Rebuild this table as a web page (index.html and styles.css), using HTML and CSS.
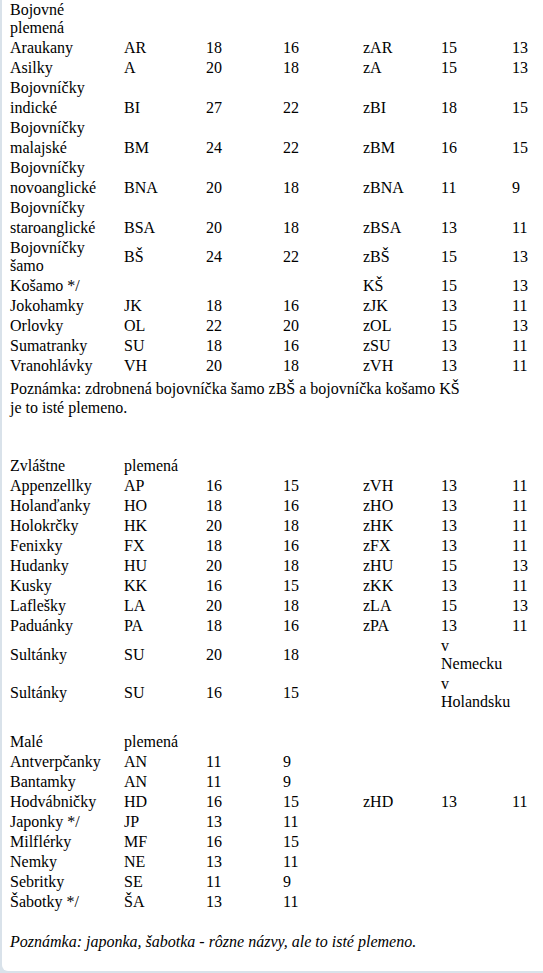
FILE: index.html
```html
<!DOCTYPE html>
<html lang="sk">
<head>
<meta charset="utf-8">
<title>Plemená</title>
<link rel="stylesheet" href="styles.css">
</head>
<body>
<div class="page">
  <table class="breeds">
    <colgroup><col class="c-name"><col class="c-code"><col class="c-n1"><col class="c-n2"><col class="c-zcode"><col class="c-z1"><col class="c-z2"></colgroup>
    <tr><td>Bojovné<br>plemená</td><td></td><td></td><td></td><td></td><td></td><td></td></tr>
    <tr><td>Araukany</td><td>AR</td><td>18</td><td>16</td><td>zAR</td><td>15</td><td>13</td></tr>
    <tr><td>Asilky</td><td>A</td><td>20</td><td>18</td><td>zA</td><td>15</td><td>13</td></tr>
    <tr><td>Bojovníčky</td><td></td><td></td><td></td><td></td><td></td><td></td></tr>
    <tr><td>indické</td><td>BI</td><td>27</td><td>22</td><td>zBI</td><td>18</td><td>15</td></tr>
    <tr><td>Bojovníčky</td><td></td><td></td><td></td><td></td><td></td><td></td></tr>
    <tr><td>malajské</td><td>BM</td><td>24</td><td>22</td><td>zBM</td><td>16</td><td>15</td></tr>
    <tr><td>Bojovníčky</td><td></td><td></td><td></td><td></td><td></td><td></td></tr>
    <tr><td>novoanglické</td><td>BNA</td><td>20</td><td>18</td><td>zBNA</td><td>11</td><td>9</td></tr>
    <tr><td>Bojovníčky</td><td></td><td></td><td></td><td></td><td></td><td></td></tr>
    <tr><td>staroanglické</td><td>BSA</td><td>20</td><td>18</td><td>zBSA</td><td>13</td><td>11</td></tr>
    <tr><td>Bojovníčky<br>šamo</td><td>BŠ</td><td>24</td><td>22</td><td>zBŠ</td><td>15</td><td>13</td></tr>
    <tr><td>Košamo */</td><td></td><td></td><td></td><td>KŠ</td><td>15</td><td>13</td></tr>
    <tr><td>Jokohamky</td><td>JK</td><td>18</td><td>16</td><td>zJK</td><td>13</td><td>11</td></tr>
    <tr><td>Orlovky</td><td>OL</td><td>22</td><td>20</td><td>zOL</td><td>15</td><td>13</td></tr>
    <tr><td>Sumatranky</td><td>SU</td><td>18</td><td>16</td><td>zSU</td><td>13</td><td>11</td></tr>
    <tr><td>Vranohlávky</td><td>VH</td><td>20</td><td>18</td><td>zVH</td><td>13</td><td>11</td></tr>
  </table>
  <p class="note">Poznámka: zdrobnená bojovníčka šamo zBŠ a bojovníčka košamo KŠ je to isté plemeno.</p>

  <table class="breeds section">
    <colgroup><col class="c-name"><col class="c-code"><col class="c-n1"><col class="c-n2"><col class="c-zcode"><col class="c-z1"><col class="c-z2"></colgroup>
    <tr><td>Zvláštne</td><td>plemená</td><td></td><td></td><td></td><td></td><td></td></tr>
    <tr><td>Appenzellky</td><td>AP</td><td>16</td><td>15</td><td>zVH</td><td>13</td><td>11</td></tr>
    <tr><td>Holanďanky</td><td>HO</td><td>18</td><td>16</td><td>zHO</td><td>13</td><td>11</td></tr>
    <tr><td>Holokrčky</td><td>HK</td><td>20</td><td>18</td><td>zHK</td><td>13</td><td>11</td></tr>
    <tr><td>Fenixky</td><td>FX</td><td>18</td><td>16</td><td>zFX</td><td>13</td><td>11</td></tr>
    <tr><td>Hudanky</td><td>HU</td><td>20</td><td>18</td><td>zHU</td><td>15</td><td>13</td></tr>
    <tr><td>Kusky</td><td>KK</td><td>16</td><td>15</td><td>zKK</td><td>13</td><td>11</td></tr>
    <tr><td>Laflešky</td><td>LA</td><td>20</td><td>18</td><td>zLA</td><td>15</td><td>13</td></tr>
    <tr><td>Paduánky</td><td>PA</td><td>18</td><td>16</td><td>zPA</td><td>13</td><td>11</td></tr>
    <tr><td>Sultánky</td><td>SU</td><td>20</td><td>18</td><td></td><td>v<br>Nemecku</td><td></td></tr>
    <tr><td>Sultánky</td><td>SU</td><td>16</td><td>15</td><td></td><td>v<br>Holandsku</td><td></td></tr>
  </table>

  <table class="breeds section-small">
    <colgroup><col class="c-name"><col class="c-code"><col class="c-n1"><col class="c-n2"><col class="c-zcode"><col class="c-z1"><col class="c-z2"></colgroup>
    <tr><td>Malé</td><td>plemená</td><td></td><td></td><td></td><td></td><td></td></tr>
    <tr><td>Antverpčanky</td><td>AN</td><td>11</td><td>9</td><td></td><td></td><td></td></tr>
    <tr><td>Bantamky</td><td>AN</td><td>11</td><td>9</td><td></td><td></td><td></td></tr>
    <tr><td>Hodvábničky</td><td>HD</td><td>16</td><td>15</td><td>zHD</td><td>13</td><td>11</td></tr>
    <tr><td>Japonky */</td><td>JP</td><td>13</td><td>11</td><td></td><td></td><td></td></tr>
    <tr><td>Milflérky</td><td>MF</td><td>16</td><td>15</td><td></td><td></td><td></td></tr>
    <tr><td>Nemky</td><td>NE</td><td>13</td><td>11</td><td></td><td></td><td></td></tr>
    <tr><td>Sebritky</td><td>SE</td><td>11</td><td>9</td><td></td><td></td><td></td></tr>
    <tr><td>Šabotky */</td><td>ŠA</td><td>13</td><td>11</td><td></td><td></td><td></td></tr>
  </table>
  <p class="note-italic">Poznámka: japonka, šabotka - rôzne názvy, ale to isté plemeno.</p>
</div>
</body>
</html>
```

FILE: styles.css
```css
html, body {
  margin: 0;
  padding: 0;
}
body {
  background: #d9e2ea;
  font-family: "Liberation Serif", "Times New Roman", serif;
  font-size: 16px;
  line-height: 18px;
  color: #000;
  overflow: hidden;
}
.page {
  background: #fff;
  margin-left: 2px;
  padding: 0 0 21px 8px;
  border-bottom-left-radius: 6px;
  height: 950px;
}
.breeds {
  border-collapse: collapse;
  border-spacing: 0;
  table-layout: fixed;
  width: 531px;
}
.breeds td {
  padding: 1px 0;
  vertical-align: middle;
  white-space: nowrap;
}
.c-name { width: 114px; }
.c-code { width: 82px; }
.c-n1 { width: 77px; }
.c-n2 { width: 80px; }
.c-zcode { width: 78px; }
.c-z1 { width: 71px; }
.c-z2 { width: 29px; }
.note {
  margin: 0;
  padding-top: 3px;
  line-height: 19px;
  max-width: 462px;
}
.section {
  margin-top: 39px;
}
.section-small {
  margin-top: 20px;
}
.note-italic {
  margin: 21px 0 0 0;
  font-style: italic;
}
```
